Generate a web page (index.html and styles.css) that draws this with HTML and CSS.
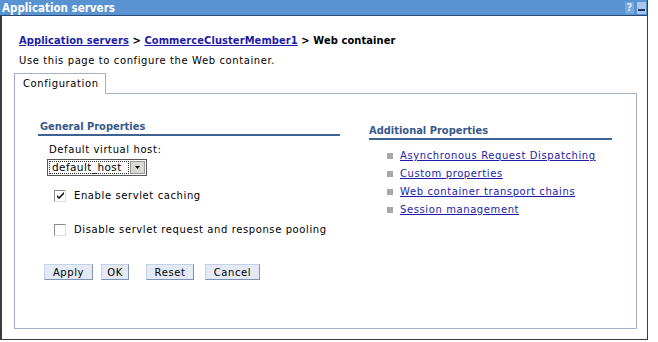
FILE: index.html
```html
<!DOCTYPE html>
<html lang="en">
<head>
  <meta charset="UTF-8" />
  <title>Application servers</title>
  <link rel="stylesheet" href="styles.css">
</head>
<body>
  <div class="window">
    <div class="titlebar">
      <span class="title">Application servers</span>
      <span class="title-icons">
        <span class="help">?</span>
        <span class="minimize"></span>
      </span>
    </div>

    <div class="page">
      <div class="breadcrumb">
        <a href="#">Application servers</a> &gt; <a href="#">CommerceClusterMember1</a> &gt; Web container
      </div>
      <p class="intro">Use this page to configure the Web container.</p>

      <div class="tabs">
        <div class="tab">Configuration</div>
      </div>

      <div class="panel">
        <div class="col-left">
          <h2 class="section-title">General Properties</h2>
          <div class="field">
            <label>Default virtual host:</label>
            <div class="select">
              <span class="select-value">default_host</span>
              <span class="select-btn">
                <svg width="5" height="3" viewBox="0 0 5 3"><path d="M0 0h5L2.5 3z" fill="#000"/></svg>
              </span>
            </div>
          </div>
          <div class="check-row">
            <span class="checkbox">
              <svg width="9" height="9" viewBox="0 0 9 9"><path d="M1 4l2 2 5-5v2L3 8 1 6z" fill="#000"/></svg>
            </span>
            Enable servlet caching
          </div>
          <div class="check-row">
            <span class="checkbox"></span>
            Disable servlet request and response pooling
          </div>
          <div class="buttons">
            <button class="btn-apply">Apply</button>
            <button class="btn-ok">OK</button>
            <button class="btn-reset">Reset</button>
            <button class="btn-cancel">Cancel</button>
          </div>
        </div>

        <div class="col-right">
          <h2 class="section-title">Additional Properties</h2>
          <ul class="links">
            <li><a href="#">Asynchronous Request Dispatching</a></li>
            <li><a href="#">Custom properties</a></li>
            <li><a href="#">Web container transport chains</a></li>
            <li><a href="#">Session management</a></li>
          </ul>
        </div>
      </div>
    </div>
  </div>
</body>
</html>
```

FILE: styles.css
```css
* {
  margin: 0;
  padding: 0;
  box-sizing: border-box;
}

body {
  background: #fff;
  font-family: "DejaVu Sans", Verdana, sans-serif;
  font-size: 10px;
  letter-spacing: 0.6px;
  color: #000;
}

.window {
  width: 648px;
  height: 340px;
  border: 1px solid #3c3c3c;
  border-left-width: 2px;
  border-top: none;
  display: flex;
  flex-direction: column;
}

.titlebar {
  height: 16px;
  background: #5a93d2;
  border-bottom: 1px solid #2a4a78;
  display: flex;
  justify-content: space-between;
  align-items: center;
  padding: 0 1px 0 2px;
  margin-left: -2px;
}

.title {
  color: #fff;
  font-family: "DejaVu Sans Condensed", "DejaVu Sans", sans-serif;
  font-weight: bold;
  font-size: 11.5px;
  letter-spacing: 0;
}

.title-icons {
  display: flex;
  align-items: center;
  gap: 3px;
}

.help {
  color: #dfe9f6;
  font-weight: bold;
  font-size: 10px;
  letter-spacing: 0;
  width: 9px;
  text-align: center;
  background: #7aa7dc;
  line-height: 12px;
}

.minimize {
  width: 9px;
  height: 12px;
  background: #a9c6ea;
  position: relative;
}

.minimize::after {
  content: "";
  position: absolute;
  left: 1px;
  right: 1px;
  bottom: 3px;
  height: 2px;
  background: #1e3a66;
}

.page {
  flex: 1;
  padding: 0 10px 10px 12px;
  display: flex;
  flex-direction: column;
}

.breadcrumb {
  margin-top: 18px;
  padding-left: 5px;
  font-family: "DejaVu Sans Condensed", "DejaVu Sans", sans-serif;
  font-weight: bold;
  font-size: 11px;
  letter-spacing: 0.1px;
  line-height: 14px;
}

.breadcrumb a {
  color: #1c1ca8;
}

.intro {
  margin-top: 6px;
  padding-left: 5px;
  line-height: 14px;
}

.tabs {
  margin-top: 5px;
  display: flex;
}

.tab {
  width: 92px;
  height: 21px;
  border: 1px solid #a3b1cc;
  border-bottom: none;
  background: #fff;
  padding: 4px 0 0 8px;
  margin-bottom: -1px;
  position: relative;
}

.panel {
  flex: 1;
  border: 1px solid #a3b1cc;
  display: flex;
  padding: 26px 24px 0 23px;
  gap: 29px;
}

.col-left {
  width: 302px;
}

.col-right {
  flex: 1;
  margin-top: 4px;
}

.section-title {
  font-family: "DejaVu Sans Condensed", "DejaVu Sans", sans-serif;
  font-size: 11px;
  font-weight: bold;
  letter-spacing: 0;
  color: #36598a;
  line-height: 14px;
  border-bottom: 2px solid #3e6392;
}

.col-left .section-title {
  padding-left: 2px;
}

.field {
  margin-top: 7px;
  padding-left: 11px;
}

.field label {
  display: block;
  line-height: 13px;
}

.select {
  margin-top: 3px;
  margin-left: -2px;
  width: 100px;
  height: 17px;
  border: 1px solid #555;
  display: flex;
  align-items: center;
  padding: 1px;
  background: #fff;
}

.select-value {
  flex: 1;
  height: 13px;
  line-height: 11px;
  border: 1px dotted #333;
  padding-left: 2px;
  font-size: 10.5px;
  letter-spacing: 0.4px;
}

.select-btn {
  width: 15px;
  height: 13px;
  margin-left: 1px;
  background: #d8d8d4;
  border: 1px solid #999;
  display: flex;
  align-items: center;
  justify-content: center;
}

.check-row {
  display: flex;
  align-items: center;
  gap: 8px;
  padding-left: 16px;
  line-height: 13px;
  margin-top: 13px;
}

.check-row + .check-row {
  margin-top: 21px;
}

.checkbox {
  width: 12px;
  height: 12px;
  border: 1px solid #8c8c8c;
  border-right-color: #ddd;
  border-bottom-color: #ddd;
  background: #fff;
  display: flex;
  align-items: center;
  justify-content: center;
}

.buttons {
  margin-top: 28px;
  padding-left: 6px;
  display: flex;
  gap: 8px;
}

.buttons button {
  font-family: "DejaVu Sans", Verdana, sans-serif;
  font-size: 10px;
  letter-spacing: 0.6px;
  height: 16px;
  padding: 0;
  background: #e3eaf5;
  border: 1px solid #7f93b5;
  border-top-color: #c5d2e6;
  border-left-color: #c5d2e6;
  color: #000;
}

.btn-apply {
  width: 49px;
}

.btn-ok {
  width: 28px;
}

.btn-reset {
  width: 48px;
  margin-left: 9px;
}

.btn-cancel {
  width: 55px;
  margin-left: 3px;
}

.links {
  list-style: none;
  margin-top: 7px;
  padding-left: 18px;
}

.links li {
  line-height: 18px;
  display: flex;
  align-items: center;
  gap: 7px;
}

.links li::before {
  content: "";
  width: 6px;
  height: 6px;
  background: #a8a8a8;
}

.links a {
  color: #1c1ca8;
}
```
